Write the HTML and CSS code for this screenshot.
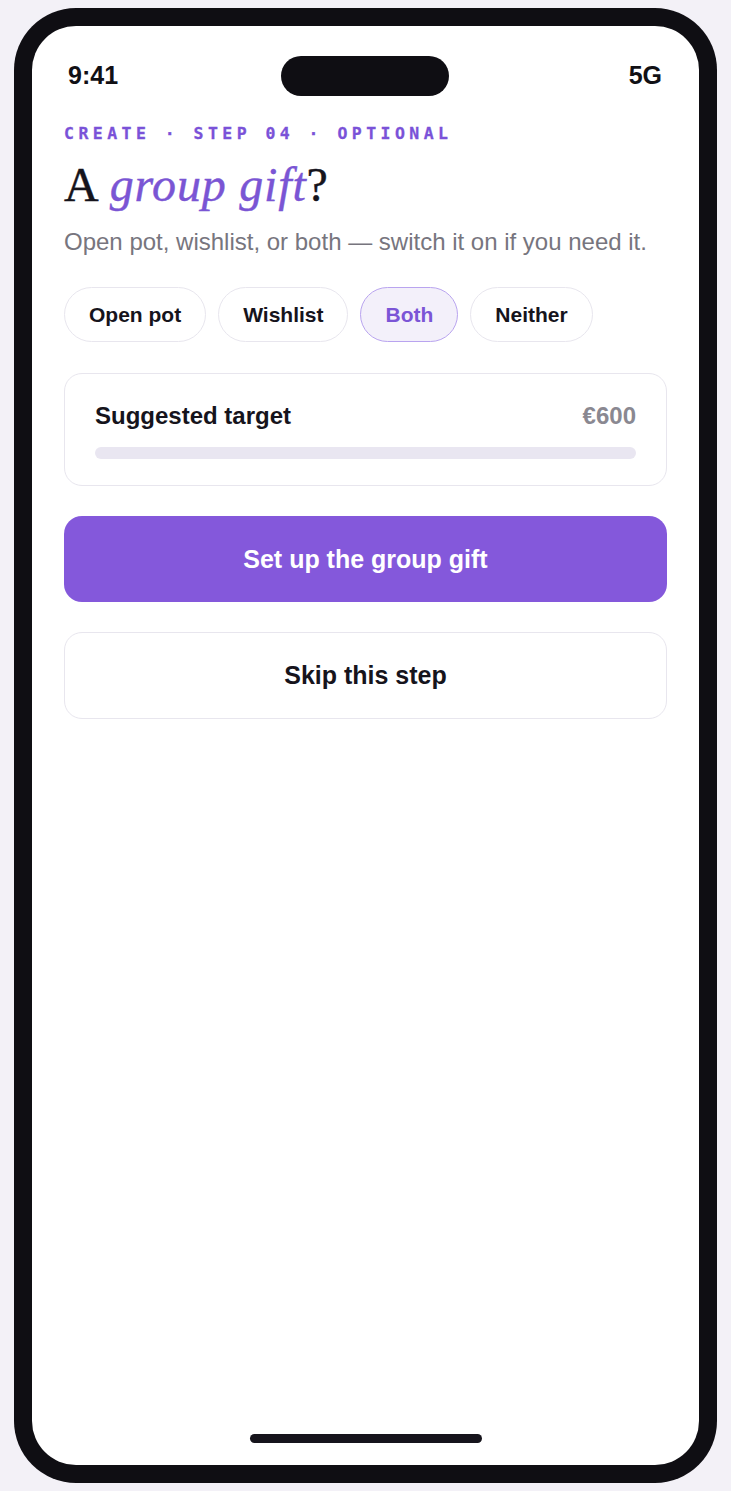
FILE: index.html
```html
<!DOCTYPE html>
<html lang="en">
<head>
<meta charset="utf-8">
<title>Create · Step 04</title>
<link rel="stylesheet" href="styles.css">
</head>
<body>
<div class="phone">
  <div class="screen">
    <div class="status">
      <span class="time">9:41</span>
      <span class="island"></span>
      <span class="net">5G</span>
    </div>
    <main class="content">
      <div class="eyebrow">CREATE · STEP 04 · OPTIONAL</div>
      <h1 class="title">A <em>group gift</em>?</h1>
      <p class="sub">Open pot, wishlist, or both — switch it on if you need it.</p>
      <div class="chips">
        <button class="chip">Open pot</button>
        <button class="chip">Wishlist</button>
        <button class="chip chip-on">Both</button>
        <button class="chip">Neither</button>
      </div>
      <section class="card">
        <div class="card-row">
          <span class="card-label">Suggested target</span>
          <span class="card-value">€600</span>
        </div>
        <div class="bar"></div>
      </section>
      <button class="btn btn-primary">Set up the group gift</button>
      <button class="btn btn-secondary">Skip this step</button>
    </main>
    <div class="home"></div>
  </div>
</div>
</body>
</html>
```

FILE: styles.css
```css
* { box-sizing: border-box; }
html, body { margin: 0; padding: 0; }
body {
  background: #f3f1f7;
  font-family: "Liberation Sans", Arial, sans-serif;
  color: #16141c;
}
.phone {
  margin: 8px 14px;
  width: 703px;
  height: 1475px;
  background: #0f0e13;
  border-radius: 62px;
  padding: 18px;
}
.screen {
  background: #ffffff;
  border-radius: 44px;
  height: 100%;
  display: flex;
  flex-direction: column;
}
.status {
  display: grid;
  grid-template-columns: 1fr auto 1fr;
  align-items: center;
  padding: 30px 37px 0 36px;
}
.time, .net {
  font-weight: 700;
  font-size: 25px;
  line-height: 28px;
  color: #111015;
  margin-top: -3px;
}
.net { justify-self: end; }
.island {
  width: 168px;
  height: 40px;
  border-radius: 20px;
  background: #0f0e13;
}
.content {
  padding: 0 32px;
  display: flex;
  flex-direction: column;
}
.eyebrow {
  margin-top: 28px;
  font-family: "DejaVu Sans Mono", "Liberation Mono", monospace;
  font-weight: 700;
  font-size: 16.5px;
  line-height: 20px;
  letter-spacing: 0.27em;
  color: #7a52d8;
  -webkit-text-stroke: 0.3px currentColor;
}
.title {
  margin: 13px 0 0;
  font-family: "Liberation Serif", "Times New Roman", serif;
  font-weight: 400;
  font-size: 48px;
  line-height: 56px;
  letter-spacing: 0.8px;
  color: #16141c;
  -webkit-text-stroke: 0.4px currentColor;
}
.title em {
  font-style: italic;
  color: #7a55d4;
}
.sub {
  margin: 14px 0 0;
  font-size: 24px;
  line-height: 30px;
  color: #77757e;
}
.chips {
  margin-top: 30px;
  display: flex;
  gap: 12px;
}
.chip {
  height: 55px;
  padding: 0 24px;
  border: 1px solid #e8e6ee;
  border-radius: 28px;
  background: #ffffff;
  font-family: "Liberation Sans", Arial, sans-serif;
  font-weight: 700;
  font-size: 21px;
  color: #16141c;
}
.chip-on {
  background: #f3f0fa;
  border-color: #b9a4ef;
  color: #7b55d6;
}
.card {
  margin-top: 31px;
  border: 1px solid #e8e6ee;
  border-radius: 18px;
  padding: 28px 30px 26px;
}
.card-row {
  display: flex;
  justify-content: space-between;
  align-items: center;
  line-height: 28px;
  font-size: 24px;
  font-weight: 700;
}
.card-value { color: #8a8891; }
.bar {
  margin-top: 17px;
  height: 12px;
  border-radius: 6px;
  background: #e9e6f1;
}
.btn {
  display: block;
  width: 100%;
  height: 86px;
  border-radius: 18px;
  font-family: "Liberation Sans", Arial, sans-serif;
  font-weight: 700;
  font-size: 25px;
}
.btn-primary {
  margin-top: 30px;
  border: none;
  background: #8458db;
  color: #ffffff;
}
.btn-secondary {
  margin-top: 30px;
  height: 87px;
  border: 1px solid #e8e6ee;
  background: #ffffff;
  color: #16141c;
}
.home {
  margin-top: auto;
  margin-bottom: 22px;
  align-self: center;
  width: 232px;
  height: 9px;
  border-radius: 5px;
  background: #16141c;
}
```
